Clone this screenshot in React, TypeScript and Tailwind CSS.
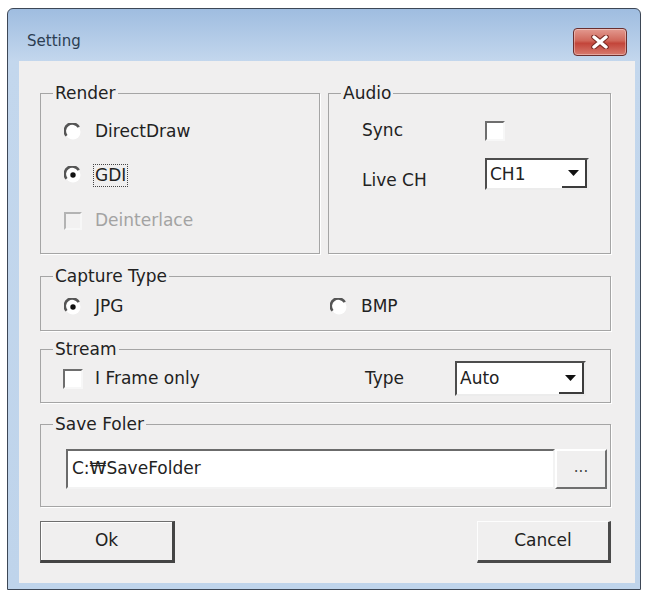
import type { ReactNode } from 'react';

// Classic Windows-style radio: dark arc over top/left, open on the lower right.
function Radio({ checked = false }: { checked?: boolean }) {
  return (
    <svg width="18" height="18" viewBox="0 0 18 18" className="shrink-0">
      <circle cx="9" cy="9" r="7.5" fill="#fff" />
      <path d="M14.75 4.18 A7.5 7.5 0 1 0 2.5 12.75" fill="none" stroke="#555" strokeWidth="2.6" />
      {checked && <circle cx="9" cy="9" r="2.7" fill="#111" />}
    </svg>
  );
}

function CheckBox({ disabled = false }: { disabled?: boolean }) {
  if (disabled) {
    return (
      <span className="block h-[18px] w-[18px] shrink-0 border-2 border-t-[#b3b3b3] border-l-[#b3b3b3] border-r-[#f7f7f7] border-b-[#f7f7f7] bg-[#f2f1f1]" />
    );
  }
  return (
    <span className="block h-[20px] w-[20px] shrink-0 border-2 border-t-[#6e6e6e] border-l-[#6e6e6e] border-r-[#f7f7f7] border-b-[#f7f7f7] bg-white" />
  );
}

function Combo({ value, className }: { value: string; className: string }) {
  return (
    <div
      className={`flex border-2 border-t-[#4d4d4d] border-l-[#4d4d4d] border-r-[#ececec] border-b-[#ececec] bg-white ${className}`}
    >
      <span className="flex-1 self-center pl-[3px] leading-none">{value}</span>
      <span className="flex w-[25px] items-center justify-center border-r-2 border-b-2 border-r-[#3c3c3c] border-b-[#3c3c3c] bg-white">
        <svg width="11" height="6" viewBox="0 0 11 6">
          <path d="M0 0 H11 L5.5 6 Z" fill="#111" />
        </svg>
      </span>
    </div>
  );
}

function Group({ title, className, children }: { title: string; className: string; children: ReactNode }) {
  return (
    <fieldset className={`min-w-0 border border-[#a5a5a5] shadow-[1px_1px_0_#fff] ${className}`}>
      <legend className="ml-[12px] px-[2px] text-[17px] leading-[20px]">{title}</legend>
      {children}
    </fieldset>
  );
}

export default function App() {
  return (
    <div className="h-[593px] w-[648px] bg-white pl-[7px] pt-[8px] text-[17px] text-[#222] [font-family:'DejaVu_Sans',sans-serif]">
      <div className="flex h-[582px] w-[634px] flex-col rounded-t-[6px] border border-[#3d4756] bg-[linear-gradient(#9fbde0,#c3d7ed_52px,#bfd4eb)] pb-[6px] pl-[11px] pr-[5px]">
        {/* title bar */}
        <div className="flex h-[52px] shrink-0 items-center justify-between pt-[13px] pl-[8px] pr-[8px]">
          <span className="text-[15px] text-[#2c3e52]">Setting</span>
          <button className="flex h-[28px] w-[54px] items-center justify-center rounded-[4px] border border-[#6a2f2f] bg-[linear-gradient(#e39a90,#d0675a_45%,#c3453a_55%,#d77b6f)] shadow-[inset_0_0_0_1px_rgba(255,255,255,0.35)]">
            <svg width="18" height="14" viewBox="0 0 18 14">
              <path d="M3 2 L15 12 M15 2 L3 12" stroke="#7a2a22" strokeWidth="5.5" strokeLinecap="round" />
              <path d="M3 2 L15 12 M15 2 L3 12" stroke="#fff" strokeWidth="3.4" strokeLinecap="round" />
            </svg>
          </button>
        </div>

        {/* client area */}
        <div className="flex flex-1 flex-col bg-[#f0efef] pl-[21px] pr-[24px] pt-[22px] pb-[20px]">
          <div className="flex h-[171px] gap-[8px]">
            <Group title="Render" className="w-[280px]">
              <div className="flex flex-col pl-[23px] pt-[18px]">
                <label className="flex h-[22px] items-center gap-[13px]">
                  <Radio />
                  <span>DirectDraw</span>
                </label>
                <label className="mt-[21px] flex h-[22px] items-center gap-[11px]">
                  <Radio checked />
                  <span className="border border-dotted border-[#444] px-[1px] leading-[21px]">GDI</span>
                </label>
                <label className="mt-[24px] flex h-[22px] items-center gap-[13px] text-[#a3a3a3]">
                  <CheckBox disabled />
                  <span>Deinterlace</span>
                </label>
              </div>
            </Group>
            <Group title="Audio" className="flex-1">
              <div className="grid grid-cols-[123px_auto] pl-[33px] pt-[17px]">
                <span className="flex h-[22px] items-center">Sync</span>
                <span className="flex h-[22px] items-center">
                  <CheckBox />
                </span>
                <span className="mt-[28px] leading-[20px]">Live CH</span>
                <Combo value="CH1" className="mt-[16px] h-[32px] w-[104px]" />
              </div>
            </Group>
          </div>

          <Group title="Capture Type" className="mt-[12px] h-[65px]">
            <div className="mt-[10px] flex h-[22px] items-center pl-[23px]">
              <label className="flex w-[266px] items-center gap-[13px]">
                <Radio checked />
                <span>JPG</span>
              </label>
              <label className="flex items-center gap-[13px]">
                <Radio />
                <span>BMP</span>
              </label>
            </div>
          </Group>

          <Group title="Stream" className="mt-[8px] h-[64px]">
            <div className="mt-[2px] flex h-[35px] items-center pl-[22px]">
              <label className="flex w-[302px] items-center gap-[12px]">
                <CheckBox />
                <span>I Frame only</span>
              </label>
              <span className="w-[90px]">Type</span>
              <Combo value="Auto" className="h-[35px] w-[131px]" />
            </div>
          </Group>

          <Group title="Save Foler" className="mt-[11px] h-[93px]">
            <div className="mt-[15px] flex h-[40px] pl-[25px]">
              <div className="flex w-[489px] items-center border-2 border-t-[#6b6b6b] border-l-[#6b6b6b] border-r-[#f3f3f3] border-b-[#f3f3f3] bg-white pl-[4px]">
                C:₩SaveFolder
              </div>
              <button className="w-[52px] border-2 border-t-white border-l-white border-r-[#6f6f6f] border-b-[#6f6f6f] bg-[#f0efef] pb-[3px] text-[15px] text-[#444]">
                ...
              </button>
            </div>
          </Group>

          <div className="mt-[14px] flex h-[42px] justify-between">
            <button className="w-[135px] border border-t-[#6e6e6e] border-l-[#6e6e6e] border-r-[3px] border-b-[3px] border-r-[#444] border-b-[#444] bg-[#f0efef] shadow-[inset_1px_1px_0_#fff]">
              Ok
            </button>
            <button className="w-[134px] border border-t-[#fdfdfd] border-l-[#fdfdfd] border-r-[3px] border-b-[3px] border-r-[#4a4a4a] border-b-[#4a4a4a] bg-[#f0efef]">
              Cancel
            </button>
          </div>
        </div>
      </div>
    </div>
  );
}
